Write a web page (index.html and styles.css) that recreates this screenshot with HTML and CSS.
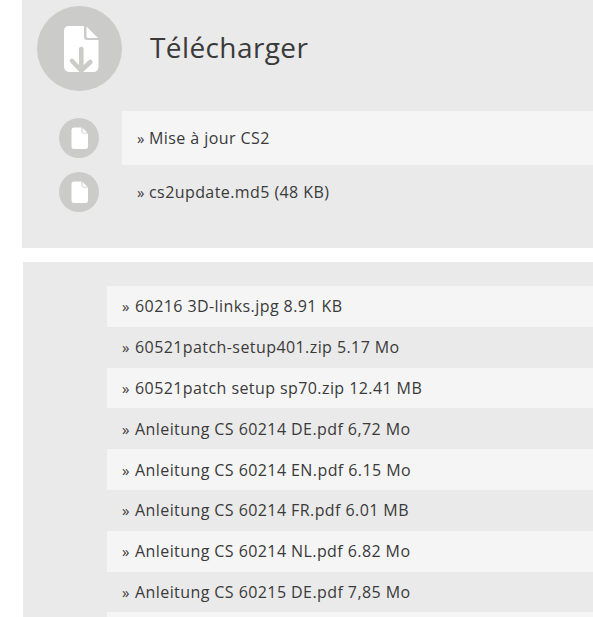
FILE: index.html
```html
<!DOCTYPE html>
<html lang="fr">
<head>
<meta charset="utf-8">
<title>Télécharger</title>
<link rel="stylesheet" href="styles.css">
</head>
<body>
<section class="downloads">
  <header class="heading">
    <span class="badge badge-large"><svg width="85" height="85" viewBox="0 0 85 85"><path fill="#fff" d="M32 20H47V31Q47 34 50 34H61.500V60Q61.500 66 56 66H33Q27 66 27 60V25Q27 20 32 20ZM49.500 20.500L61 32H51Q49.500 32 49.500 30.500Z"/><path class="arrow" d="M44.300 43V64M35 55L44.300 64.500L53.300 56"/></svg></span>
    <h1>Télécharger</h1>
  </header>
  <ul class="updates">
    <li><span class="badge"><svg width="40" height="40" viewBox="0 0 40 40"><path fill="#fff" d="M15 9.500H22.500V13.500Q22.500 15.500 24.500 15.500H29V28.500Q29 31 26.500 31H15Q12.500 31 12.500 28.500V12Q12.500 9.500 15 9.500ZM23.500 10L28.500 14.700H24.500Q23.500 14.700 23.500 13.700Z"/></svg></span><a><i>»</i>Mise à jour CS2</a></li>
    <li><span class="badge"><svg width="40" height="40" viewBox="0 0 40 40"><path fill="#fff" d="M15 9.500H22.500V13.500Q22.500 15.500 24.500 15.500H29V28.500Q29 31 26.500 31H15Q12.500 31 12.500 28.500V12Q12.500 9.500 15 9.500ZM23.500 10L28.500 14.700H24.500Q23.500 14.700 23.500 13.700Z"/></svg></span><a><i>»</i>cs2update.md5 (48 KB)</a></li>
  </ul>
</section>
<section class="archive">
  <ul class="files">
    <li><i>»</i>60216 3D-links.jpg 8.91 KB</li>
    <li><i>»</i>60521patch-setup401.zip 5.17 Mo</li>
    <li><i>»</i>60521patch setup sp70.zip 12.41 MB</li>
    <li><i>»</i>Anleitung CS 60214 DE.pdf 6,72 Mo</li>
    <li><i>»</i>Anleitung CS 60214 EN.pdf 6.15 Mo</li>
    <li><i>»</i>Anleitung CS 60214 FR.pdf 6.01 MB</li>
    <li><i>»</i>Anleitung CS 60214 NL.pdf 6.82 Mo</li>
    <li><i>»</i>Anleitung CS 60215 DE.pdf 7,85 Mo</li>
    <li></li>
  </ul>
</section>
</body>
</html>
```

FILE: styles.css
```css
* { box-sizing: border-box; }
html, body { height: 617px; overflow: hidden; }
body { margin: 0; background: #fff; color: #3a3a3a; font: 400 16px/24px "Open Sans", sans-serif; letter-spacing: .42px; }
ul { list-style: none; margin: 0; padding: 0; }
i { width: 8px; font-style: normal; font-size: 15px; letter-spacing: 0; }
.downloads { height: 248px; margin-left: 22px; background: #eaeaea; }
.heading { display: flex; height: 111px; padding: 6px 0 0 15px; }
h1 { margin: 20px 0 0 28px; font-size: 28px; line-height: 42px; font-weight: 400; letter-spacing: .4px; }
.badge { display: flex; flex: none; width: 40px; height: 40px; border-radius: 50%; background: #cbcbca; }
.badge-large { width: 85px; height: 85px; }
.arrow { fill: none; stroke: #cbcbca; stroke-width: 4.6; stroke-linecap: round; }
.updates li { display: flex; align-items: center; height: 54px; padding-left: 37px; }
.updates a { display: flex; align-items: center; flex: 1; height: 54px; margin-left: 23px; padding-left: 15px; gap: 4px; }
.updates li:first-child a { background: #f5f5f5; }
.archive { height: 355px; margin: 14px 0 0 23px; padding: 24px 0 0 84px; background: #eaeaea; overflow: hidden; }
.files li { display: flex; align-items: center; height: 40.8px; padding-left: 15px; gap: 5px; }
.files li:nth-child(odd) { background: #f5f5f5; }
```
